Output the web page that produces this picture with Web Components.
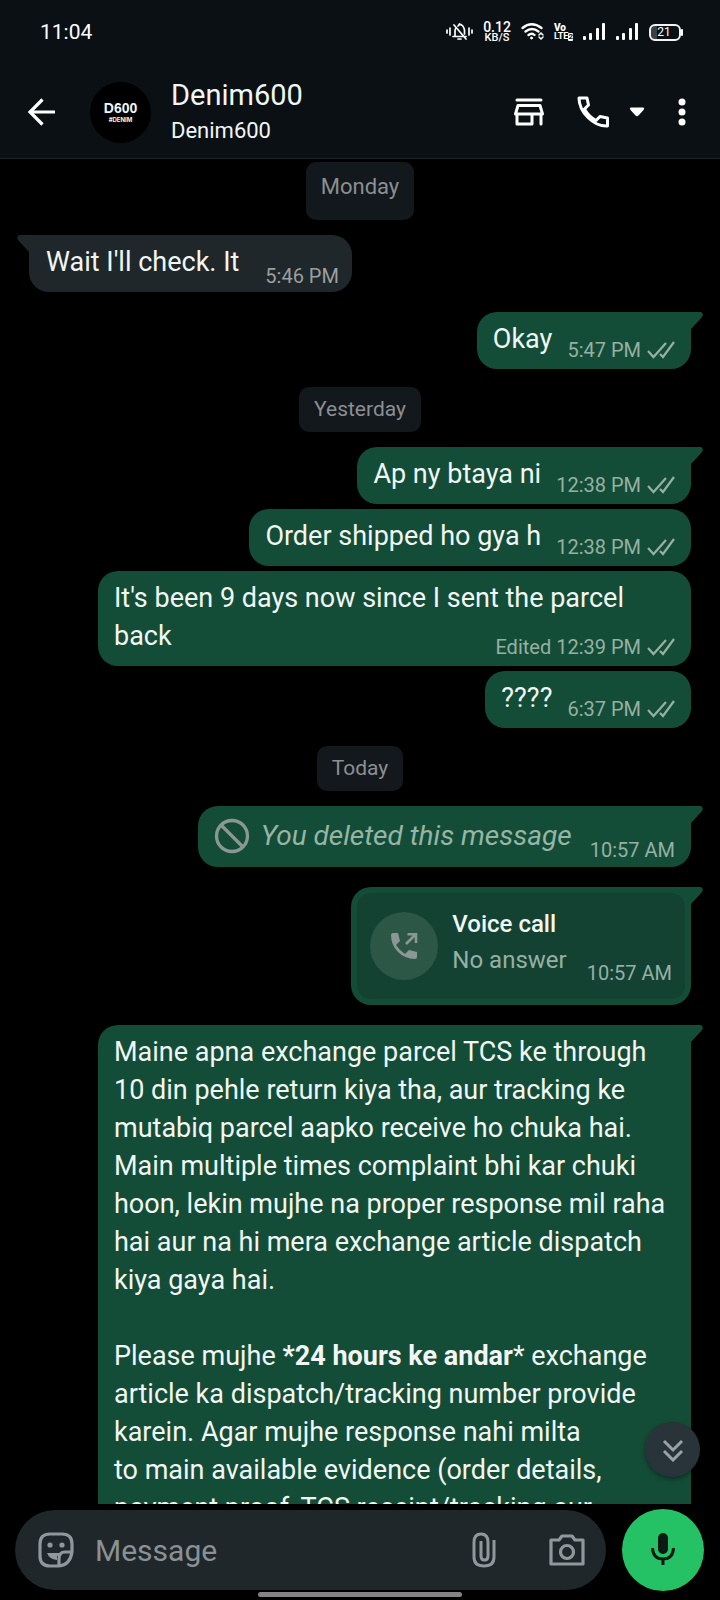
<!DOCTYPE html>
<html lang="en">
<head>
<meta charset="utf-8">
<meta name="viewport" content="width=device-width, initial-scale=1">
<title>Denim600</title>
<style>
  html, body { margin: 0; height: 100%; background: #000; }
  body { font-family: Roboto, "Noto Sans", sans-serif; color: #f1f6f4; }
</style>
</head>
<body>
<chat-screen>
  <status-bar slot="top" clock="11:04" battery="21"></status-bar>
  <chat-header slot="top" name="Denim600" subtitle="Denim600"></chat-header>

  <date-chip tall>Monday</date-chip>
  <chat-bubble incoming tail time="5:46 PM">Wait I'll check. It</chat-bubble>
  <chat-bubble tail ticks time="5:47 PM">Okay</chat-bubble>
  <date-chip>Yesterday</date-chip>
  <chat-bubble tail ticks time="12:38 PM">Ap ny btaya ni</chat-bubble>
  <chat-bubble ticks time="12:38 PM">Order shipped ho gya h</chat-bubble>
  <chat-bubble long ticks edited time="12:39 PM">It's been 9 days now since I sent the parcel back</chat-bubble>
  <chat-bubble ticks time="6:37 PM">????</chat-bubble>
  <date-chip>Today</date-chip>
  <chat-bubble tail deleted time="10:57 AM">You deleted this message</chat-bubble>
  <call-bubble time="10:57 AM"><span slot="title">Voice call</span><span slot="state">No answer</span></call-bubble>
  <chat-bubble long tail>Maine apna exchange parcel TCS ke through 10 din pehle return kiya tha, aur tracking ke mutabiq parcel aapko receive ho chuka hai. Main multiple times complaint bhi kar chuki hoon, lekin mujhe na proper response mil raha hai aur na hi mera exchange article dispatch kiya gaya hai.<br><br>Please mujhe <b>*24 hours ke andar</b>* exchange article ka dispatch/tracking number provide karein. Agar mujhe response nahi milta<br>to main available evidence (order details, payment proof, TCS receipt/tracking aur</chat-bubble>

  <message-composer slot="bottom"></message-composer>
</chat-screen>

<script>
function define(name, html) {
  customElements.define(name, class extends HTMLElement {
    connectedCallback() {
      if (this.shadowRoot) return;
      const attr = key => this.getAttribute(key) || '';
      this.attachShadow({ mode: 'open' }).innerHTML = html(attr, this);
    }
  });
}

const signal = '<svg width="23" height="18" viewBox="0 0 23 18" fill="#fff" aria-hidden="true"><rect x="0" y="13" width="3" height="4" rx="1"/><rect x="6" y="10" width="3" height="7" rx="1"/><rect x="13" y="5" width="3" height="12" rx="1"/><rect x="19" y="0" width="3" height="17" rx="1"/></svg>';

define('status-bar', attr => `
<style>
  :host { display: flex; align-items: center; height: 64px; padding: 0 37px 0 40px; color: #fff; }
  .clock { flex: 1; font-size: 21px; line-height: 24px; }
  .icons { display: flex; align-items: center; gap: 10px; }
  svg { display: block; flex: none; }
  .rate { display: grid; justify-items: center; font-weight: 500; }
  .rate b { font-size: 14px; line-height: 11px; font-weight: 500; }
  .rate span { font-size: 11px; line-height: 10px; }
  .volte { display: grid; font-weight: 700; font-size: 9px; line-height: 9px; }
  .volte b { font-size: 10px; }
  .volte div { display: flex; align-items: center; }
  .volte i { font-style: normal; background: #fff; color: #0b1014; font-size: 8px; line-height: 8px; border-radius: 1px; }
  .battery { box-sizing: border-box; width: 32px; height: 17px; border: 2px solid #f1f3f4; border-radius: 6px; font-size: 12px; line-height: 13px; text-align: center; position: relative; padding-right: 2px; margin-right: 2px; background: linear-gradient(90deg, #3a4044 21%, transparent 21%); }
  .battery::after { content: ""; position: absolute; right: -4px; top: 3px; width: 2px; height: 7px; background: #fff; border-radius: 1px; }
</style>
<div class="clock">${attr('clock')}</div>
<div class="icons">
  <svg width="27" height="18" viewBox="0 0 27 18" fill="none" stroke="#fff" stroke-width="1.7" stroke-linecap="round" aria-hidden="true">
    <path d="M1 7v3M4 5v7M26 7v3M23 5v7M7 13.500h13M9 13V8q0-2 1-3M12 3q1-1 1.500-2 4 1 5 6v4M8 2l12 14"/><path d="M12 16h3"/>
  </svg>
  <div class="rate"><b>0.12</b><span>KB/S</span></div>
  <svg width="23" height="18" viewBox="0 0 23 18" fill="none" stroke="#fff" stroke-width="2.300" stroke-linecap="round" aria-hidden="true">
    <path d="M1.500 5q9-7.500 19 0M4.500 8.500q6.500-5 13 0M7.500 12q3.500-2.500 6 0"/><circle cx="10.500" cy="15" r="1" fill="#fff" stroke-width="1"/>
    <path d="M18 12l2-2 2 2M18 14l2 2 2-2" stroke-width="1.500"/>
  </svg>
  <div class="volte"><b>Vo</b><div>LTE<i>2</i></div></div>
  ${signal}${signal}
  <div class="battery">${attr('battery')}</div>
</div>`);

define('chat-header', attr => `
<style>
  :host { display: flex; align-items: center; box-sizing: border-box; height: 94px; padding: 2px 33px 0 26px; }
  button { display: block; flex: none; padding: 0; border: 0; background: none; color: #fff; }
  svg { display: block; }
  .avatar { flex: none; display: grid; align-content: center; justify-items: center; width: 61px; height: 61px; margin: 0 20px 0 34px; border-radius: 50%; background: #000; }
  .avatar b { font: 700 14px/15px "Liberation Sans", sans-serif; }
  .avatar span { font: 700 6px/8px Inter, sans-serif; }
  .who { flex: 1; min-width: 0; padding-top: 2px; }
  h1 { margin: 0; font-weight: 400; font-size: 29px; line-height: 36px; }
  p { margin: 0; font-size: 22px; line-height: 36px; }
  .actions { display: flex; align-items: center; }
  .call { margin-left: 31px; }
  .caret { margin: 0 32px 0 20px; }
</style>
<button aria-label="Back"><svg width="30" height="30" viewBox="0 0 30 30" fill="none" stroke="#fff" stroke-width="3.200"><path d="M29 15H4M16.500 2.500L4 15l12.500 12.500"/></svg></button>
<div class="avatar"><b>D600</b><span>#DENIM</span></div>
<div class="who"><h1>${attr('name')}</h1><p>${attr('subtitle')}</p></div>
<div class="actions">
  <button aria-label="Store"><svg width="34" height="30" viewBox="0 0 34 30" fill="none" stroke="#fff" stroke-width="3" stroke-linejoin="round" stroke-linecap="round"><path d="M5 3H29M6 8.500H28L30.500 17H3.500ZM5 17V27H20V17M29 17V27"/></svg></button>
  <button class="call" aria-label="Call"><svg width="32" height="32" viewBox="0 0 32 32" fill="none" stroke="#fff" stroke-width="3" stroke-linejoin="round"><path d="M2 2H10L11.500 9L7.500 13Q11.500 20.500 19 24.500L23 20.500L30.500 22V30Q20 30.500 11 21.500T2 2Z"/></svg></button>
  <button class="caret" aria-label="Call options"><svg width="16" height="10" viewBox="0 0 16 10"><path d="M2 0.500H14Q16 1 14.500 3L9.500 8.500Q8 10 6.500 8.500L1.500 3Q0 1 2 0.500Z" fill="#fff"/></svg></button>
  <button aria-label="More"><svg width="10" height="28" viewBox="0 0 10 28" fill="#fff"><circle cx="5" cy="4" r="3.500"/><circle cx="5" cy="14" r="3.500"/><circle cx="5" cy="24" r="3.500"/></svg></button>
</div>`);

define('chat-screen', () => `
<style>
  :host { display: flex; flex-direction: column; height: 100vh; overflow: hidden; background: #000; }
  header { flex: none; background: #0b1014; border-bottom: 1px solid #1d2225; }
  main { flex: 1; min-height: 0; position: relative; }
  .log { display: flex; flex-direction: column; height: 100%; overflow: hidden; padding: 0 29px; box-sizing: border-box; }
  ::slotted(*:not([slot])) { flex: none; }
  .jump { position: absolute; right: 20px; bottom: 27px; width: 55px; height: 55px; padding: 0; border: 0; border-radius: 50%; background: #29333a; display: grid; place-items: center; box-shadow: 0 2px 5px #0006; }
  footer { flex: none; }
</style>
<header><slot name="top"></slot></header>
<main>
  <div class="log"><slot></slot></div>
  <button class="jump" aria-label="Scroll to latest"><svg width="22" height="24" viewBox="0 0 22 24" fill="none" stroke="#98a2a8" stroke-width="3"><path d="M2 3l9 9 9-9M2 13l9 9 9-9"/></svg></button>
</main>
<footer><slot name="bottom"></slot></footer>`);

define('date-chip', () => `
<style>
  :host { display: block; align-self: center; box-sizing: border-box; height: 45px; margin: 18px 0 15px; padding: 0 15px; border-radius: 10px; background: #13181c; color: #8b8f92; font-size: 21px; line-height: 45px; }
  :host([tall]) { height: 58px; margin-top: 3px; font-size: 22px; line-height: 50px; }
</style><slot></slot>`);

const ticks = '<svg width="28" height="18" viewBox="0 0 28 18" fill="none" stroke="currentColor" stroke-width="2.200" aria-label="Delivered"><path d="M1 10l5.500 6L19 2M13 13l3 3L27 1"/></svg>';

const bubbleStyles = `
  :host { --fill: #144d37; --meta: #96b0a4; position: relative; display: flex; align-items: flex-end; gap: 15px; align-self: flex-end; box-sizing: border-box; margin-bottom: 5px; border-radius: 20px; background: var(--fill); }
  :host([tail])::after { content: ""; position: absolute; top: 0; right: -12px; width: 13px; height: 18px; background: var(--fill); clip-path: path("M0 0H11Q14 2 12 5L1 17V18H0Z"); }
  .meta { display: flex; align-items: center; gap: 6px; flex: none; color: var(--meta); font-size: 20px; line-height: 24px; }
  svg { display: block; flex: none; }`;

define('chat-bubble', (attr, el) => `
<style>${bubbleStyles}
  :host { padding: 8px 16px 4px 16px; }
  :host([tail]) { border-top-right-radius: 0; }
  :host([incoming]) { --fill: #1f272a; --meta: #9b9fa1; align-self: flex-start; gap: 26px; padding-left: 17px; padding-right: 13px; border-radius: 0 20px 20px 20px; }
  :host([incoming])::after { right: auto; left: -12px; transform: scaleX(-1); }
  :host([ticks]) .meta { margin-bottom: 3px; }
  .text { font-size: 27px; line-height: 38px; margin-bottom: 7px; }
  :host([long]) { display: grid; width: 90%; max-width: 593px; }
  :host([long]) > * { grid-area: 1 / 1; }
  .text, .meta { grid-area: 1 / 1; }
  :host([long]) .meta { align-self: end; justify-self: end; }
  :host([deleted]) { padding-top: 11px; padding-bottom: 5px; gap: 18px; }
  :host([deleted]) .text { display: flex; align-items: center; gap: 11px; font-size: 28px; font-style: italic; color: #96b5a6; }
</style>
<div class="text">${el.hasAttribute('deleted') ? '<svg width="36" height="36" viewBox="0 0 36 36" fill="none" stroke="#8a9795" stroke-width="3.300" aria-hidden="true"><circle cx="18" cy="18" r="15.500"/><path d="M7 7l22 22"/></svg>' : ''}<span><slot></slot></span></div>
${attr('time') ? `<div class="meta"><time>${el.hasAttribute('edited') ? 'Edited ' : ''}${attr('time')}</time>${el.hasAttribute('ticks') ? ticks : ''}</div>` : ''}`);

define('call-bubble', attr => `
<style>${bubbleStyles}
  :host { padding: 6px; border-top-right-radius: 0; }
  :host::after { content: ""; position: absolute; top: 0; right: -12px; width: 13px; height: 18px; background: var(--fill); clip-path: path("M0 0H11Q14 2 12 5L1 17V18H0Z"); }
  .card { display: flex; align-items: center; height: 106px; padding: 0 13px; border-radius: 14px; background: #134233; }
  .disc { display: grid; place-items: center; width: 68px; height: 68px; margin-right: 14px; border-radius: 50%; background: #2c5646; }
  .lines { padding-bottom: 8px; }
  .title { font-weight: 500; font-size: 24px; line-height: 36px; }
  .state { font-size: 24px; line-height: 36px; color: #96b0a4; }
  .meta { align-self: flex-end; margin: 0 0 14px 20px; }
</style>
<div class="card">
  <div class="disc"><svg width="28" height="28" viewBox="0 0 28 28" aria-hidden="true"><path d="M1 3Q1 1 3 1H8L10 9L6 13Q10 19 15 22L19 18L27 20V25Q27 27 25 27Q15 27 8 20T1 3Z" fill="#8a9795"/><path d="M16 12L25 3M17.500 2.200H26V11" fill="none" stroke="#8a9795" stroke-width="2.600"/></svg></div>
  <div class="lines"><div class="title"><slot name="title"></slot></div><div class="state"><slot name="state"></slot></div></div>
  <div class="meta"><time>${attr('time')}</time></div>
</div>`);

define('message-composer', () => `
<style>
  :host { display: block; padding: 5px 16px 3px 15px; }
  form { display: flex; align-items: center; gap: 16px; margin: 0; }
  .field { flex: 1; min-width: 0; box-sizing: border-box; display: flex; align-items: center; height: 80px; padding: 0 20px 0 22px; border-radius: 40px; background: #1f272a; }
  button { display: grid; place-items: center; flex: none; padding: 0; border: 0; background: none; }
  svg { display: block; }
  input { flex: 1; min-width: 0; margin: 0 20px; padding: 2px 0 0; border: 0; outline: 0; background: none; color: #e9edef; font: 400 30px/40px Roboto, sans-serif; }
  input::placeholder { color: #8a9195; opacity: 1; }
  .attach { margin-right: 52px; }
  .mic { width: 82px; height: 82px; border-radius: 50%; background: #24c265; }
  .home { width: 204px; height: 5px; margin: 1px auto 0; border-radius: 3px; background: #848484; }
</style>
<form>
  <div class="field">
    <button type="button" aria-label="Stickers"><svg width="38" height="38" viewBox="0 0 38 38" fill="none" stroke="#8f989c" stroke-width="3.200" stroke-linejoin="round"><path d="M13 3H25Q35 3 35 13V21Q33 34 22 35H13Q3 35 3 25V13Q3 3 13 3Z"/><path d="M35 21H28Q22 21 22 28V35"/><circle cx="13" cy="14" r="2.600" fill="#8f989c" stroke="none"/><circle cx="25" cy="14" r="2.600" fill="#8f989c" stroke="none"/><path d="M10 22H24L20 25.500V29Q12 28 10 22Z" fill="#8f989c" stroke="none"/></svg></button>
    <input type="text" placeholder="Message" aria-label="Message">
    <button type="button" class="attach" aria-label="Attach"><svg width="24" height="38" viewBox="0 0 24 38" fill="none" stroke="#8f989c" stroke-width="3"><path d="M22 9V26Q22 35 12 35T2 26V11Q2 3 9 3T16 11V25Q16 29 12.500 29T9 25V10"/></svg></button>
    <button type="button" aria-label="Camera"><svg width="38" height="38" viewBox="0 0 38 38" fill="none" stroke="#8f989c" stroke-width="3.200" stroke-linejoin="round"><path d="M3 9H11L14 5H24L27 9H35V33H3Z"/><circle cx="19" cy="21" r="6.500"/></svg></button>
  </div>
  <button type="button" class="mic" aria-label="Record voice message"><svg width="26" height="36" viewBox="0 0 26 36"><rect x="8" y="1" width="10" height="21" rx="5" fill="#0b1a14"/><path d="M2.500 16Q3 27 13 27T23.500 16M13 27V33" fill="none" stroke="#0b1a14" stroke-width="3"/></svg></button>
</form>
<div class="home"></div>`);

/* Extra room below a message whenever the next one starts a new group. */
document.querySelectorAll('chat-bubble, call-bubble').forEach(bubble => {
  const next = bubble.nextElementSibling;
  if (next && next.matches('[tail], call-bubble')) bubble.style.marginBottom = '20px';
  if (next && next.matches('date-chip')) bubble.style.marginBottom = '0';
});
</script>
</body>
</html>
